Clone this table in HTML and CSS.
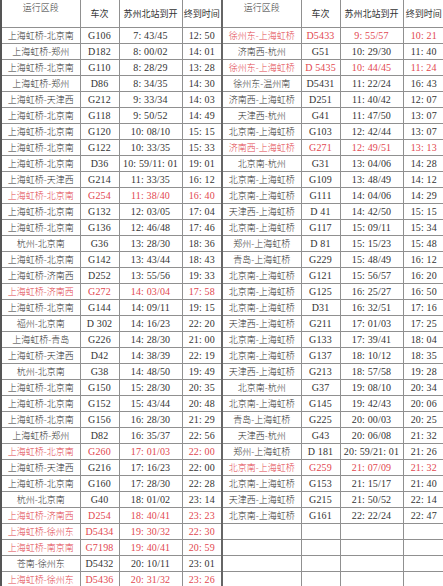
FILE: index.html
```html
<!DOCTYPE html>
<html lang="zh-CN">
<head>
<meta charset="utf-8">
<title>苏州北站列车时刻表</title>
<link rel="stylesheet" href="styles.css">
</head>
<body>
<table class="timetable">
<colgroup>
<col class="c-route"><col class="c-train"><col class="c-time"><col class="c-end">
<col class="c-route"><col class="c-train"><col class="c-time"><col class="c-end2">
</colgroup>
<thead>
<tr>
<th class="route top">运行区段</th><th>车次</th><th>苏州北站到开</th><th>终到时间</th>
<th class="route top mid">运行区段</th><th>车次</th><th>苏州北站到开</th><th>终到时间</th>
</tr>
</thead>
<tbody>
<tr><td class="route">上海虹桥-北京南</td><td>G106</td><td>7: 43/45</td><td>12: 50</td><td class="route mid red">徐州东-上海虹桥</td><td class="red">D5433</td><td class="red">9: 55/57</td><td class="red">10: 21</td></tr>
<tr><td class="route">上海虹桥-郑州</td><td>D182</td><td>8: 00/02</td><td>14: 01</td><td class="route mid">济南西-杭州</td><td>G51</td><td>10: 29/30</td><td>11: 40</td></tr>
<tr><td class="route">上海虹桥-北京南</td><td>G110</td><td>8: 28/29</td><td>13: 28</td><td class="route mid red">徐州东-上海虹桥</td><td class="red">D 5435</td><td class="red">10: 44/45</td><td class="red">11: 24</td></tr>
<tr><td class="route">上海虹桥-郑州</td><td>D86</td><td>8: 34/35</td><td>14: 30</td><td class="route mid">徐州东-温州南</td><td>D5431</td><td>11: 22/24</td><td>16: 43</td></tr>
<tr><td class="route">上海虹桥-天津西</td><td>G212</td><td>9: 33/34</td><td>14: 03</td><td class="route mid">济南西-上海虹桥</td><td>D251</td><td>11: 40/42</td><td>12: 07</td></tr>
<tr><td class="route">上海虹桥-北京南</td><td>G118</td><td>9: 50/52</td><td>14: 49</td><td class="route mid">天津西-杭州</td><td>G41</td><td>11: 47/50</td><td>13: 07</td></tr>
<tr><td class="route">上海虹桥-北京南</td><td>G120</td><td>10: 08/10</td><td>15: 15</td><td class="route mid">北京南-上海虹桥</td><td>G103</td><td>12: 42/44</td><td>13: 07</td></tr>
<tr><td class="route">上海虹桥-北京南</td><td>G122</td><td>10: 33/35</td><td>15: 33</td><td class="route mid red">济南西-上海虹桥</td><td class="red">G271</td><td class="red">12: 49/51</td><td class="red">13: 13</td></tr>
<tr><td class="route">上海虹桥-北京南</td><td>D36</td><td>10: 59/11: 01</td><td>19: 01</td><td class="route mid">北京南-杭州</td><td>G31</td><td>13: 04/06</td><td>14: 28</td></tr>
<tr><td class="route">上海虹桥-天津西</td><td>G214</td><td>11: 33/35</td><td>16: 12</td><td class="route mid">北京南-上海虹桥</td><td>G109</td><td>13: 48/49</td><td>14: 12</td></tr>
<tr><td class="route red">上海虹桥-北京南</td><td class="red">G254</td><td class="red">11: 38/40</td><td class="red">16: 40</td><td class="route mid">北京南-上海虹桥</td><td>G111</td><td>14: 04/06</td><td>14: 29</td></tr>
<tr><td class="route">上海虹桥-北京南</td><td>G132</td><td>12: 03/05</td><td>17: 04</td><td class="route mid">天津西-上海虹桥</td><td>D 41</td><td>14: 42/50</td><td>15: 15</td></tr>
<tr><td class="route">上海虹桥-北京南</td><td>G136</td><td>12: 46/48</td><td>17: 46</td><td class="route mid">北京南-上海虹桥</td><td>G117</td><td>15: 09/11</td><td>15: 34</td></tr>
<tr><td class="route">杭州-北京南</td><td>G36</td><td>13: 28/30</td><td>18: 36</td><td class="route mid">郑州-上海虹桥</td><td>D 81</td><td>15: 15/23</td><td>15: 48</td></tr>
<tr><td class="route">上海虹桥-北京南</td><td>G142</td><td>13: 43/44</td><td>18: 43</td><td class="route mid">青岛-上海虹桥</td><td>G229</td><td>15: 48/49</td><td>16: 12</td></tr>
<tr><td class="route">上海虹桥-济南西</td><td>D252</td><td>13: 55/56</td><td>19: 33</td><td class="route mid">北京南-上海虹桥</td><td>G121</td><td>15: 56/57</td><td>16: 20</td></tr>
<tr><td class="route red">上海虹桥-济南西</td><td class="red">G272</td><td class="red">14: 03/04</td><td class="red">17: 58</td><td class="route mid">北京南-上海虹桥</td><td>G125</td><td>16: 25/27</td><td>16: 50</td></tr>
<tr><td class="route">上海虹桥-北京南</td><td>G144</td><td>14: 09/11</td><td>19: 15</td><td class="route mid">北京南-上海虹桥</td><td>D31</td><td>16: 32/51</td><td>17: 16</td></tr>
<tr><td class="route">福州-北京南</td><td>D 302</td><td>14: 16/23</td><td>22: 20</td><td class="route mid">天津西-上海虹桥</td><td>G211</td><td>17: 01/03</td><td>17: 25</td></tr>
<tr><td class="route">上海虹桥-青岛</td><td>G226</td><td>14: 28/30</td><td>21: 00</td><td class="route mid">北京南-上海虹桥</td><td>G133</td><td>17: 39/41</td><td>18: 04</td></tr>
<tr><td class="route">上海虹桥-天津西</td><td>D42</td><td>14: 38/39</td><td>22: 19</td><td class="route mid">北京南-上海虹桥</td><td>G137</td><td>18: 10/12</td><td>18: 35</td></tr>
<tr><td class="route">杭州-北京南</td><td>G38</td><td>14: 48/50</td><td>19: 49</td><td class="route mid">天津西-上海虹桥</td><td>G213</td><td>18: 57/58</td><td>19: 28</td></tr>
<tr><td class="route">上海虹桥-北京南</td><td>G150</td><td>15: 28/30</td><td>20: 35</td><td class="route mid">北京南-杭州</td><td>G37</td><td>19: 08/10</td><td>20: 34</td></tr>
<tr><td class="route">上海虹桥-北京南</td><td>G152</td><td>15: 43/44</td><td>20: 48</td><td class="route mid">北京南-上海虹桥</td><td>G145</td><td>19: 42/43</td><td>20: 06</td></tr>
<tr><td class="route">上海虹桥-北京南</td><td>G156</td><td>16: 28/30</td><td>21: 29</td><td class="route mid">青岛-上海虹桥</td><td>G225</td><td>20: 00/03</td><td>20: 25</td></tr>
<tr><td class="route">上海虹桥-郑州</td><td>D82</td><td>16: 35/37</td><td>22: 56</td><td class="route mid">天津西-杭州</td><td>G43</td><td>20: 06/08</td><td>21: 32</td></tr>
<tr><td class="route red">上海虹桥-北京南</td><td class="red">G260</td><td class="red">17: 01/03</td><td class="red">22: 00</td><td class="route mid">郑州-上海虹桥</td><td>D 181</td><td>20: 59/21: 01</td><td>21: 26</td></tr>
<tr><td class="route">上海虹桥-天津西</td><td>G216</td><td>17: 16/23</td><td>22: 00</td><td class="route mid red">北京南-上海虹桥</td><td class="red">G259</td><td class="red">21: 07/09</td><td class="red">21: 32</td></tr>
<tr><td class="route">上海虹桥-北京南</td><td>G160</td><td>17: 28/30</td><td>22: 28</td><td class="route mid">北京南-上海虹桥</td><td>G153</td><td>21: 15/17</td><td>21: 40</td></tr>
<tr><td class="route">杭州-北京南</td><td>G40</td><td>18: 01/02</td><td>23: 14</td><td class="route mid">天津西-上海虹桥</td><td>G215</td><td>21: 50/52</td><td>22: 14</td></tr>
<tr><td class="route red">上海虹桥-济南西</td><td class="red">D254</td><td class="red">18: 40/41</td><td class="red">23: 23</td><td class="route mid">北京南-上海虹桥</td><td>G161</td><td>22: 22/24</td><td>22: 47</td></tr>
<tr><td class="route red">上海虹桥-徐州东</td><td class="red">D5434</td><td class="red">19: 30/32</td><td class="red">22: 30</td><td class="route mid"></td><td></td><td></td><td></td></tr>
<tr><td class="route red">上海虹桥-南京南</td><td class="red">G7198</td><td class="red">19: 40/41</td><td class="red">20: 59</td><td class="route mid"></td><td></td><td></td><td></td></tr>
<tr><td class="route">苍南-徐州东</td><td>D5432</td><td>20: 10/11</td><td>23: 01</td><td class="route mid"></td><td></td><td></td><td></td></tr>
<tr><td class="route red">上海虹桥-徐州东</td><td class="red">D5436</td><td class="red">20: 31/32</td><td class="red">23: 26</td><td class="route mid"></td><td></td><td></td><td></td></tr>
</tbody>
</table>
</body>
</html>
```

FILE: styles.css
```css
html, body {
  margin: 0;
  padding: 0;
  background: #ffffff;
}

.timetable {
  border-collapse: collapse;
  table-layout: fixed;
  width: 443px;
  font-family: "Liberation Serif", "Noto Sans CJK SC", serif;
  font-size: 10px;
  letter-spacing: 0.15px;
  color: #333333;
}

.c-route { width: 79px; }
.c-train { width: 39px; }
.c-time { width: 63px; }
.c-end { width: 40px; }
.c-end2 { width: 41px; }

.timetable th,
.timetable td {
  border: 1px solid #909090;
  padding: 0;
  text-align: center;
  vertical-align: middle;
  white-space: nowrap;
  overflow: hidden;
  line-height: 14px;
  height: 15px;
  font-weight: normal;
}

.timetable th {
  height: 26px;
  font-family: "Noto Sans CJK SC", sans-serif;
  font-size: 9px;
  letter-spacing: 0;
  border-top: none;
}

.timetable th.top {
  vertical-align: top;
  padding-top: 1px;
}

.timetable .route {
  font-family: "Noto Sans CJK SC", sans-serif;
  font-size: 9px;
  font-weight: 300;
  letter-spacing: 0;
}

.timetable tr > :first-child {
  border-left: 2px solid #555555;
}

.timetable tr > :last-child {
  border-right: none;
}

.timetable .mid {
  border-left: 2px solid #666666;
}

.timetable .red {
  color: #e2474f;
}
```
